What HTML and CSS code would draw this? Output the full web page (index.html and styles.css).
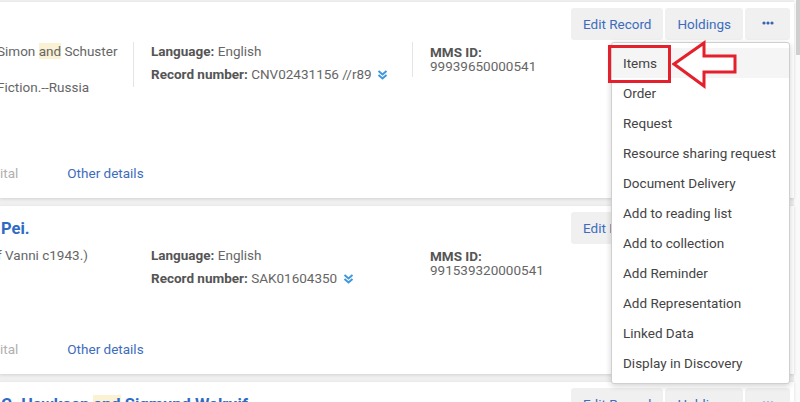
FILE: index.html
```html
<!DOCTYPE html>
<html lang="en">
<head>
<meta charset="UTF-8">
<meta name="viewport" content="width=device-width, initial-scale=1.0">
<title>Search Results</title>
<link rel="stylesheet" href="styles.css">
</head>
<body>
  <div class="page">
    <div class="results">

      <div class="card">
        <div class="card-head">
          <div class="card-title"></div>
          <div class="actions">
            <button class="btn">Edit Record</button>
            <button class="btn">Holdings</button>
            <div class="more">
              <button class="btn btn-more">
                <svg width="12" height="4" viewBox="0 0 12 4"><circle cx="2" cy="2" r="1.6"/><circle cx="6" cy="2" r="1.6"/><circle cx="10" cy="2" r="1.6"/></svg>
              </button>
              <ul class="menu">
                <li class="menu-item active">Items</li>
                <li class="menu-item">Order</li>
                <li class="menu-item">Request</li>
                <li class="menu-item">Resource sharing request</li>
                <li class="menu-item">Document Delivery</li>
                <li class="menu-item">Add to reading list</li>
                <li class="menu-item">Add to collection</li>
                <li class="menu-item">Add Reminder</li>
                <li class="menu-item">Add Representation</li>
                <li class="menu-item">Linked Data</li>
                <li class="menu-item">Display in Discovery</li>
                <!-- callout pointing at the Items entry -->
                <li class="callout-box"></li>
                <li class="callout-arrow">
                  <svg width="66" height="50" viewBox="0 0 66 50">
                    <polygon points="2,24 32,3 32,16 63,16 63,32 32,32 32,46" fill="#fff" stroke="#e3202b" stroke-width="3" stroke-linejoin="miter"/>
                  </svg>
                </li>
              </ul>
            </div>
          </div>
        </div>
        <div class="card-body body-tall">
          <div class="col col-main">
            <p class="cut">Simon <span class="hl">and</span> Schuster</p>
            <p class="cut">Fiction.--Russia</p>
          </div>
          <div class="col col-info">
            <p><b>Language:</b> English</p>
            <p><b>Record number:</b> CNV02431156 //r89 <svg class="chev" width="11" height="10" viewBox="0 0 11 10"><polyline points="1.5,1 5.5,4.5 9.5,1"/><polyline points="1.5,5 5.5,8.5 9.5,5"/></svg></p>
          </div>
          <div class="col col-id">
            <p><b>MMS ID:</b></p>
            <p>99939650000541</p>
          </div>
        </div>
        <div class="card-foot">
          <span class="muted">ital</span>
          <a class="link">Other details</a>
        </div>
      </div>

      <div class="card">
        <div class="card-head">
          <div class="card-title">Pei.</div>
          <div class="actions">
            <button class="btn">Edit Record</button>
            <button class="btn">Holdings</button>
            <button class="btn btn-more">
              <svg width="12" height="4" viewBox="0 0 12 4"><circle cx="2" cy="2" r="1.6"/><circle cx="6" cy="2" r="1.6"/><circle cx="10" cy="2" r="1.6"/></svg>
            </button>
          </div>
        </div>
        <div class="card-body body-short plain">
          <div class="col col-main">
            <p class="cut">f Vanni c1943.)</p>
          </div>
          <div class="col col-info">
            <p><b>Language:</b> English</p>
            <p><b>Record number:</b> SAK01604350 <svg class="chev" width="11" height="10" viewBox="0 0 11 10"><polyline points="1.5,1 5.5,4.5 9.5,1"/><polyline points="1.5,5 5.5,8.5 9.5,5"/></svg></p>
          </div>
          <div class="col col-id">
            <p><b>MMS ID:</b></p>
            <p>991539320000541</p>
          </div>
        </div>
        <div class="card-foot">
          <span class="muted">ital</span>
          <a class="link">Other details</a>
        </div>
      </div>

      <div class="card">
        <div class="card-head">
          <div class="card-title">G. Hawksen <span class="hl">and</span> Sigmund Walruif</div>
          <div class="actions">
            <button class="btn">Edit Record</button>
            <button class="btn">Holdings</button>
            <button class="btn btn-more">
              <svg width="12" height="4" viewBox="0 0 12 4"><circle cx="2" cy="2" r="1.6"/><circle cx="6" cy="2" r="1.6"/><circle cx="10" cy="2" r="1.6"/></svg>
            </button>
          </div>
        </div>
      </div>

    </div>
    <div class="scrollbar"><div class="thumb"></div></div>
  </div>
</body>
</html>
```

FILE: styles.css
```css
body {
  margin: 0;
  font-family: Roboto, "Liberation Sans", Arial, sans-serif;
  font-size: 13.5px;
  color: #666;
  background-color: #efefef;
  overflow: hidden;
}

p {
  margin: 0;
}

.page {
  display: flex;
  height: 402px;
}

.results {
  flex: 1;
  padding-top: 2px;
}

.scrollbar {
  width: 6px;
  background-color: #fafafa;
  display: flex;
  justify-content: flex-end;
}

.thumb {
  width: 4px;
  height: 55px;
  background-color: #cfcfcf;
}

.card {
  position: relative;
  background-color: #fff;
  margin-bottom: 8px;
  box-shadow: 0 1px 3px rgba(0, 0, 0, 0.12);
}

.card-head {
  display: flex;
  justify-content: space-between;
  align-items: center;
  padding: 6px 4px 0 1px;
}

.card-title {
  font-size: 16.5px;
  font-weight: 700;
  color: #2f6bc4;
  white-space: nowrap;
}

.actions {
  display: flex;
  gap: 2px;
}

.btn {
  height: 32px;
  padding: 0 12px;
  border: none;
  border-radius: 3px;
  background-color: #f0f0f0;
  color: #3d6cbd;
  font-family: inherit;
  font-size: 13.5px;
  cursor: pointer;
}

.btn-more {
  width: 45px;
  padding: 0;
  display: flex;
  align-items: center;
  justify-content: center;
}

.btn-more svg {
  fill: #3a62b0;
  margin-top: -3px;
}

.more {
  position: relative;
}

.menu {
  position: absolute;
  right: 0;
  top: 34px;
  z-index: 10;
  width: 177px;
  margin: 0;
  padding: 5px 0;
  list-style: none;
  background-color: #fff;
  border: 1px solid #cfcfcf;
  border-radius: 3px;
  box-shadow: 0 2px 6px rgba(0, 0, 0, 0.18);
}

.menu-item {
  height: 30px;
  line-height: 30px;
  padding-left: 11px;
  color: #444;
  white-space: nowrap;
}

.menu-item.active {
  background-color: #f5f5f5;
}

.callout-box {
  position: absolute;
  left: -4px;
  top: 2px;
  width: 57px;
  height: 32px;
  border: 3px solid #e3202b;
}

.callout-arrow {
  position: absolute;
  left: 60px;
  top: -3px;
  line-height: 0;
}

.card-body {
  display: flex;
  margin-top: 2px;
  line-height: 18px;
}

.body-tall {
  min-height: 122px;
}

.body-short {
  min-height: 94px;
}

.col-main {
  width: 133px;
}

.col-main p {
  margin-bottom: 18px;
  white-space: nowrap;
}

.cut {
  margin-left: -3px;
}

.col-info {
  width: 261px;
  padding: 0 0 4px 17px;
  border-left: 1px solid #e4e4e4;
  align-self: flex-start;
}

.col-info p + p {
  margin-top: 5px;
}

.col-id {
  padding: 3px 0 4px 17px;
  line-height: 14px;
  border-left: 1px solid #e4e4e4;
  align-self: flex-start;
}

.plain .col-info,
.plain .col-id {
  border-left-color: transparent;
}

b {
  color: #555;
}

.hl {
  background-color: #fbf1d3;
}

.chev {
  fill: none;
  stroke: #3f97dd;
  stroke-width: 2;
  margin-left: 2px;
  vertical-align: -1px;
}

.card-foot {
  display: flex;
  gap: 49px;
  line-height: 18px;
  padding-bottom: 16px;
}

.muted {
  color: #b0b0b0;
}

.link {
  color: #3d6cbd;
}
```
